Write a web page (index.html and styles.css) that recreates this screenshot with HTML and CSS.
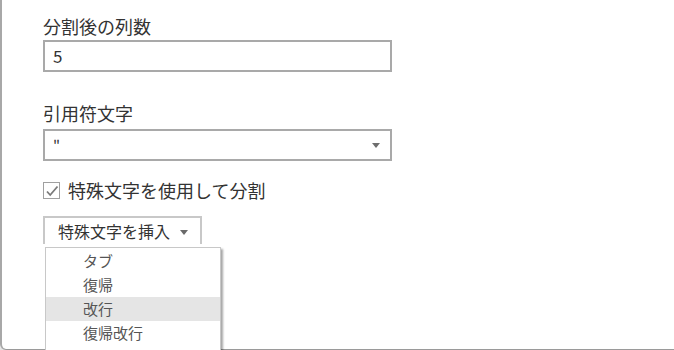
FILE: index.html
```html
<!DOCTYPE html>
<html>
<head>
  <title>列の分割</title>
  <link rel="stylesheet" href="styles.css">
</head>
<body>
  <div class="panel">
    <label class="field-label first" for="columnCount">分割後の列数</label>
    <div class="text-box" id="columnCount">5</div>

    <label class="field-label second">引用符文字</label>
    <div class="select-box">
      <span class="select-value">"</span>
      <span class="select-arrow"></span>
    </div>

    <div class="checkbox-row">
      <span class="checkbox">
        <svg width="16" height="16" viewBox="0 0 16 16">
          <polyline points="3,9.5 6.2,13 13.5,4.5" fill="none" stroke="#7a7a7a" stroke-width="1.8"/>
        </svg>
      </span>
      <span class="checkbox-label">特殊文字を使用して分割</span>
    </div>

    <div class="insert-wrap">
      <div class="insert-button">
        特殊文字を挿入
        <span class="button-arrow"></span>
      </div>
      <ul class="menu">
        <li class="menu-item">タブ</li>
        <li class="menu-item">復帰</li>
        <li class="menu-item active">改行</li>
        <li class="menu-item">復帰改行</li>
      </ul>
    </div>
  </div>
</body>
</html>
```

FILE: styles.css
```css
* {
  margin: 0;
  padding: 0;
  box-sizing: border-box;
}

body {
  width: 674px;
  height: 350px;
  overflow: hidden;
  background-color: #e6e6e6;
  font-family: "Noto Sans CJK JP", "Noto Sans", sans-serif;
  color: #333333;
}

.panel {
  height: 350px;
  background-color: #ffffff;
  border-left: 2px solid #a8a8a8;
  border-bottom: 1px solid #9a9a9a;
  border-bottom-left-radius: 6px;
  padding-left: 41px;
}

.field-label {
  display: block;
  font-size: 18px;
  line-height: 24px;
  color: #333333;
}

.field-label.first {
  padding-top: 14px;
  margin-bottom: 2px;
}

.field-label.second {
  margin-top: 29px;
  margin-bottom: 4px;
}

.text-box,
.select-box {
  width: 349px;
  height: 32px;
  border: 2px solid #a9a9a9;
  padding-left: 8px;
  font-size: 17px;
  line-height: 28px;
  color: #333333;
}

.select-box {
  display: flex;
  align-items: center;
  justify-content: space-between;
  padding-right: 10px;
}

.select-value {
  font-size: 15px;
}

.select-arrow {
  width: 0;
  height: 0;
  border-left: 4.5px solid transparent;
  border-right: 4.5px solid transparent;
  border-top: 5px solid #6e6e6e;
}

.checkbox-row {
  display: flex;
  align-items: center;
  height: 24px;
  margin-top: 17px;
}

.checkbox {
  width: 17px;
  height: 17px;
  border: 1px solid #a0a0a0;
  display: flex;
  align-items: center;
  justify-content: center;
  margin-right: 8px;
}

.checkbox svg {
  display: block;
  flex-shrink: 0;
}

.checkbox-label {
  font-size: 18px;
}

.insert-wrap {
  position: relative;
  margin-top: 14px;
}

.insert-button {
  display: inline-flex;
  align-items: center;
  width: 159px;
  height: 28px;
  border: 2px solid #c8c8c8;
  border-bottom: none;
  padding-left: 13px;
  font-size: 16px;
  color: #333333;
}

.button-arrow {
  width: 0;
  height: 0;
  border-left: 4px solid transparent;
  border-right: 4px solid transparent;
  border-top: 5px solid #6a6a6a;
  margin-left: 10px;
  margin-top: 2px;
}

.menu {
  position: absolute;
  left: 2px;
  top: 31px;
  width: 176px;
  list-style: none;
  background-color: #ffffff;
  border: 1px solid #c8c8c8;
  border-bottom: none;
  box-shadow: 2px 2px 2px rgba(0, 0, 0, 0.35);
  padding-top: 1px;
  padding-bottom: 5px;
}

.menu-item {
  height: 24px;
  line-height: 24px;
  padding-left: 37px;
  font-size: 15px;
  color: #555555;
}

.menu-item.active {
  background-color: #e5e5e5;
}
```
